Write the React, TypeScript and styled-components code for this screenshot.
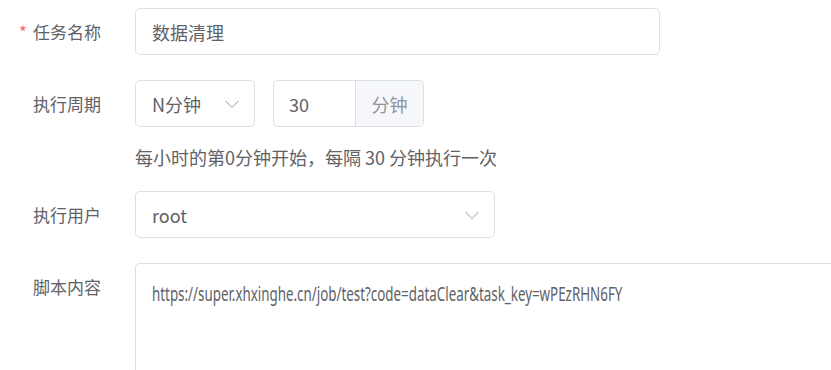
import React from "react";
import styled, { createGlobalStyle } from "styled-components";

const GlobalStyle = createGlobalStyle`
  html, body {
    margin: 0;
    padding: 0;
    background: #ffffff;
    overflow: hidden;
  }
  body {
    font-family: "Noto Sans", "Noto Sans CJK SC", sans-serif;
  }
`;

const Form = styled.form`
  width: 831px;
  height: 370px;
  padding-top: 8px;
  box-sizing: border-box;
  display: flex;
  flex-direction: column;
  gap: 25px;
`;

const Row = styled.div`
  display: flex;
  align-items: flex-start;
`;

const Label = styled.label<{ required?: boolean }>`
  width: 135px;
  flex-shrink: 0;
  box-sizing: border-box;
  padding-right: 34px;
  text-align: right;
  line-height: 47px;
  font-size: 17px;
  color: #606266;
  font-family: "Noto Sans CJK SC", sans-serif;

  &::before {
    content: ${({ required }) => (required ? '"*"' : '""')};
    color: #f56c6c;
    margin-right: 6px;
  }
`;

const Control = styled.div`
  display: flex;
  flex-direction: column;
  flex: 1;
  min-width: 0;
`;

const Inline = styled.div`
  display: flex;
  gap: 18px;
`;

const Box = styled.div<{ w?: number }>`
  width: ${({ w }) => (w ? `${w}px` : "auto")};
  height: 47px;
  box-sizing: border-box;
  border: 1px solid #dcdfe6;
  border-radius: 5px;
  display: flex;
  align-items: center;
  padding: 0 14px 0 16px;
  font-size: 18px;
  color: #606266;
  font-family: "Noto Sans CJK SC", sans-serif;
  background: #fff;
`;

const Value = styled.span`
  flex: 1;
  white-space: nowrap;
`;

const Group = styled.div`
  display: flex;
  height: 47px;
  box-sizing: border-box;
  border: 1px solid #dcdfe6;
  border-radius: 5px;
  overflow: hidden;
  font-family: "Noto Sans CJK SC", sans-serif;
  font-size: 18px;
`;

const Num = styled.div`
  width: 81px;
  display: flex;
  align-items: center;
  padding-left: 15px;
  box-sizing: border-box;
  color: #606266;
`;

const Addon = styled.div`
  width: 67px;
  display: flex;
  align-items: center;
  justify-content: center;
  background: #f5f7fa;
  border-left: 1px solid #dcdfe6;
  color: #909399;
`;

const Hint = styled.div`
  font-size: 18px;
  color: #606266;
  font-family: "Noto Sans CJK SC", sans-serif;
  margin-top: 21px;
  line-height: 18px;
  white-space: nowrap;
`;

const TextArea = styled.div`
  height: 120px;
  margin-right: -20px;
  box-sizing: border-box;
  border: 1px solid #dcdfe6;
  border-radius: 5px;
  padding: 16px 16px;
  font-size: 20px;
  line-height: 28px;
  color: #606266;
  font-family: "Noto Sans", sans-serif;
  white-space: nowrap;
`;

/* the source font is a narrow one; squeeze Noto Sans to the same width */
const Narrow = styled.span`
  display: inline-block;
  transform: scaleX(0.668);
  transform-origin: left center;
`;

const Chevron = () => (
  <svg width="16" height="16" viewBox="0 0 16 16" fill="none">
    <path d="M1.5 5 L8 11.5 L14.5 5" stroke="#c0c4cc" strokeWidth="1.2" />
  </svg>
);

const App: React.FC = () => {
  return (
    <>
      <GlobalStyle />
      <Form>
        <Row>
          <Label required>任务名称</Label>
          <Control>
            <Box w={525}>
              <Value>数据清理</Value>
            </Box>
          </Control>
        </Row>
        <Row>
          <Label>执行周期</Label>
          <Control>
            <Inline>
              <Box w={120}>
                <Value>N分钟</Value>
                <Chevron />
              </Box>
              <Group>
                <Num>30</Num>
                <Addon>分钟</Addon>
              </Group>
            </Inline>
            <Hint>每小时的第0分钟开始，每隔 30 分钟执行一次</Hint>
          </Control>
        </Row>
        <Row>
          <Label>执行用户</Label>
          <Control>
            <Box w={360}>
              <Value>root</Value>
              <Chevron />
            </Box>
          </Control>
        </Row>
        <Row>
          <Label>脚本内容</Label>
          <Control>
            <TextArea>
              <Narrow>https://super.xhxinghe.cn/job/test?code=dataClear&amp;task_key=wPEzRHN6FY</Narrow>
            </TextArea>
          </Control>
        </Row>
      </Form>
    </>
  );
};

export default App;
